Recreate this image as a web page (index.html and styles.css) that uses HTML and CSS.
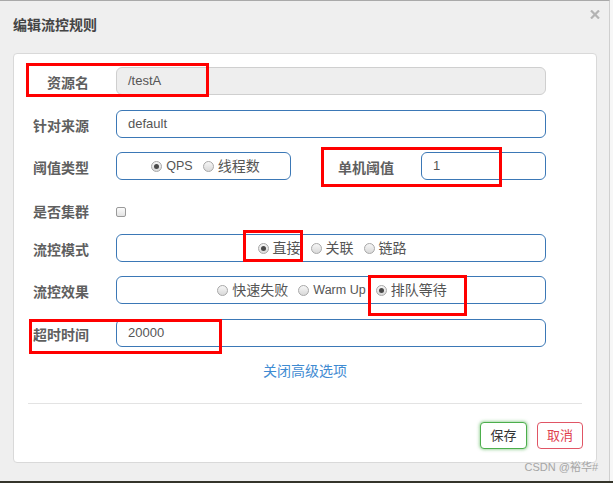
FILE: index.html
```html
<!DOCTYPE html>
<html lang="zh-CN">
<head>
<meta charset="utf-8">
<title>编辑流控规则</title>
<link rel="stylesheet" href="styles.css">
</head>
<body>
<div class="screen">
  <div class="modal">
    <div class="header">
      <h4 class="title">编辑流控规则</h4>
      <svg class="close" width="10" height="9" viewBox="0 0 10 9"><path d="M1 0.5 L9 8.5 M9 0.5 L1 8.5" stroke="#b4b4b4" stroke-width="2.2" fill="none"/></svg>
    </div>
    <div class="panel">
      <div class="form">
        <div class="row r1">
          <label class="lbl">资源名</label>
          <div class="input disabled latin">/testA</div>
        </div>
        <div class="row r2">
          <label class="lbl">针对来源</label>
          <div class="input latin">default</div>
        </div>
        <div class="row r3">
          <label class="lbl">阈值类型</label>
          <div class="group small">
            <span class="opt"><i class="radio on"></i><span class="latin-opt">QPS</span></span>
            <span class="opt"><i class="radio"></i>线程数</span>
          </div>
          <label class="lbl lbl2">单机阈值</label>
          <div class="input short latin">1</div>
        </div>
        <div class="row r4">
          <label class="lbl">是否集群</label>
          <div class="cb-wrap"><i class="checkbox"></i></div>
        </div>
        <div class="row r5">
          <label class="lbl">流控模式</label>
          <div class="group wide">
            <span class="opt"><i class="radio on"></i>直接</span>
            <span class="opt"><i class="radio"></i>关联</span>
            <span class="opt"><i class="radio"></i>链路</span>
          </div>
        </div>
        <div class="row r6">
          <label class="lbl">流控效果</label>
          <div class="group wide">
            <span class="opt"><i class="radio"></i>快速失败</span>
            <span class="opt"><i class="radio"></i><span class="latin-opt">Warm Up</span></span>
            <span class="opt"><i class="radio on"></i>排队等待</span>
          </div>
        </div>
        <div class="row r7">
          <label class="lbl">超时时间</label>
          <div class="input latin">20000</div>
        </div>
      </div>
      <div class="link-row"><a class="link">关闭高级选项</a></div>
      <div class="divider"></div>
      <div class="footer">
        <button class="btn save">保存</button>
        <button class="btn cancel">取消</button>
      </div>
    </div>
  </div>
  <div class="taskbar"></div>

  <div class="mark m1"></div>
  <div class="mark m2"></div>
  <div class="mark m3"></div>
  <div class="mark m4"></div>
  <div class="mark m5"></div>
  <div class="watermark">CSDN @裕华#</div>
</div>
</body>
</html>
```

FILE: styles.css
```css
* { box-sizing: border-box; }
html, body { margin: 0; padding: 0; }
body {
  width: 613px;
  height: 483px;
  overflow: hidden;
  background: #f7f7f7;
  font-family: "Liberation Sans", "Noto Sans CJK SC", sans-serif;
  font-size: 14px;
  color: #555;
}
.screen {
  position: relative;
  width: 613px;
  height: 483px;
  display: flex;
  flex-direction: column;
}
.modal {
  width: 610px;
  height: 481px;
  background: #efefef;
  border-top: 1px solid #a9a9a9;
  border-right: 1px solid #cfcfcf;
}
.taskbar {
  height: 2px;
  background: #34342a;
}
.header {
  height: 52px;
  display: flex;
  justify-content: space-between;
  align-items: flex-start;
  padding: 0 9px 0 13px;
}
.title {
  margin: 14px 0 0 0;
  font-size: 14px;
  line-height: 20px;
  font-weight: bold;
  color: #444;
}
.close {
  margin-top: 9px;
}
.panel {
  margin-left: 13px;
  width: 584px;
  height: 410px;
  background: #fff;
  border: 1px solid #d9d9d9;
  border-radius: 4px;
  padding-top: 13px;
}
.form {
  display: flex;
  flex-direction: column;
}
.row {
  display: flex;
  align-items: flex-start;
  height: 28px;
}
.r1 { margin-bottom: 15px; }
.r2 { margin-bottom: 14px; }
.r3 { margin-bottom: 16px; }
.r4 { margin-bottom: 10px; }
.r5 { margin-bottom: 14px; }
.r6 { margin-bottom: 15px; }
.lbl {
  width: 75px;
  flex: none;
  text-align: right;
  font-weight: bold;
  color: #5f5f5f;
  line-height: 20px;
  padding-top: 6px;
  margin-right: 27px;
  white-space: nowrap;
}
.lbl2 {
  width: 103px;
}
.input {
  width: 430px;
  height: 28px;
  border: 1px solid #3b78b6;
  border-radius: 6px;
  padding: 0 11px;
  line-height: 26px;
  color: #555;
  background: #fff;
}
.latin { font-size: 13px; }
.input.disabled {
  background: #eee;
  border-color: #cfcfcf;
}
.input.short {
  width: 125px;
}
.group {
  height: 28px;
  border: 1px solid #3b78b6;
  border-radius: 6px;
  display: flex;
  align-items: center;
  justify-content: center;
  gap: 10px;
  color: #555;
  padding-left: 4px;
}
.group.small { width: 175px; }
.group.wide { width: 430px; padding-left: 2px; }
.opt {
  display: flex;
  align-items: center;
  line-height: 20px;
  white-space: nowrap;
}
.latin-opt { font-size: 12.5px; }
.radio {
  display: inline-block;
  width: 11px;
  height: 11px;
  border-radius: 50%;
  border: 1px solid #a8a8a8;
  background: linear-gradient(#f6f6f6, #d9d9d9);
  margin-right: 4px;
  position: relative;
}
.radio.on::after {
  content: "";
  position: absolute;
  left: 2px;
  top: 2px;
  width: 5px;
  height: 5px;
  border-radius: 50%;
  background: #4a4a4a;
}
.cb-wrap {
  height: 28px;
  display: flex;
  align-items: center;
  padding-top: 3px;
}
.checkbox {
  display: inline-block;
  width: 10px;
  height: 10px;
  border: 1px solid #9a9a9a;
  border-radius: 2px;
  background: linear-gradient(#fbfbfb, #e3e3e3);
}
.link-row {
  margin-top: 14px;
  text-align: center;
  line-height: 20px;
}
.link {
  color: #3f8bd2;
  text-decoration: none;
}
.divider {
  margin: 22px 14px 0 14px;
  height: 1px;
  background: #e3e3e3;
}
.footer {
  margin-top: 18px;
  display: flex;
  justify-content: flex-end;
  gap: 10px;
  padding-right: 13px;
}
.btn {
  height: 27px;
  border-radius: 4px;
  background: #fff;
  font-family: "Liberation Sans", "Noto Sans CJK SC", sans-serif;
  font-size: 13px;
  line-height: 25px;
  padding: 0;
}
.save {
  width: 47px;
  border: 1px solid #4cae4c;
  color: #333;
  box-shadow: 0 0 3px 1px rgba(92, 184, 92, 0.55);
}
.cancel {
  width: 46px;
  border: 1px solid #e05565;
  color: #e0404f;
}
.mark {
  position: absolute;
  border: 3px solid #ff0000;
}
.m1 { left: 26px; top: 63px; width: 183px; height: 34px; }
.m2 { left: 321px; top: 147px; width: 181px; height: 40px; }
.m3 { left: 243px; top: 230px; width: 60px; height: 32px; }
.m4 { left: 368px; top: 275px; width: 99px; height: 41px; }
.m5 { left: 29px; top: 319px; width: 193px; height: 35px; }
.watermark {
  position: absolute;
  right: 15px;
  top: 459px;
  font-size: 11px;
  line-height: 16px;
  color: #a6a6a6;
}
```
